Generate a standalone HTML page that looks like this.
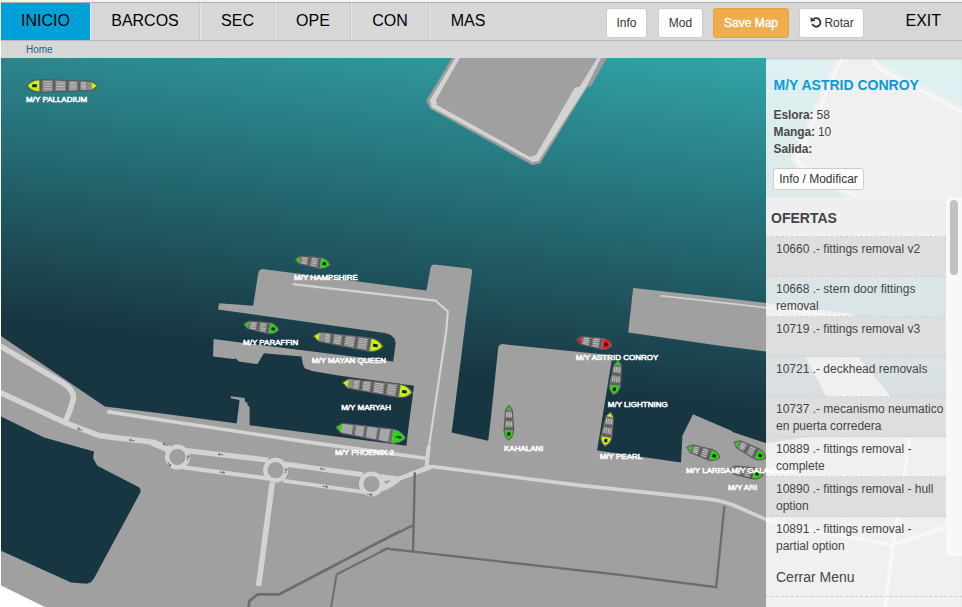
<!DOCTYPE html>
<html lang="es">
<head>
<meta charset="utf-8">
<title>Marina - Inicio</title>
<style>
html,body{margin:0;padding:0;background:#fff;}
body{width:962px;height:607px;overflow:hidden;position:relative;font-family:"Liberation Sans",Arial,Helvetica,sans-serif;color:#333;}
#map{position:absolute;left:0;top:0;}
#topline{position:absolute;left:0;top:0;width:962px;height:2px;background:#f3f3f3;}
#nav{position:absolute;left:1px;top:2px;width:961px;height:39px;background:#d7d7d7;border-top:1px solid #adadad;box-sizing:border-box;border-bottom:1px solid #b8b8b8;}
.tab{position:absolute;top:0;height:37px;line-height:35px;font-size:16px;color:#000;text-align:center;box-sizing:border-box;border-right:1px solid #c9c9c9;border-left:1px solid #e6e6e6;}
.tab.on{background:#00a1d9;border-color:#00a1d9;}
#exit{position:absolute;left:904.5px;top:0;height:37px;line-height:35px;font-size:16px;color:#000;}
.btn{position:absolute;box-sizing:border-box;height:30px;line-height:27px;font-size:12px;color:#333;background:#fff;border:1px solid #ccc;border-radius:3px;text-align:center;}
.btn.w{background:#f0ad4e;border-color:#eea236;color:#fff;-webkit-text-stroke:0.35px #fff;}
#crumb{position:absolute;left:1px;top:41px;width:961px;height:17px;background:#d7d7d7;font-size:10px;line-height:18px;color:#17628a;}
#crumb span{position:absolute;left:25px;top:0;}
#panel{position:absolute;left:766px;top:58px;width:196px;height:549px;background:rgba(255,255,255,0.84);box-shadow:inset 0 2px 2px -1px rgba(0,0,0,0.18);}
#panel h3{position:absolute;left:7.5px;top:19px;margin:0;font-size:14px;line-height:16px;font-weight:bold;color:#0a9ad7;white-space:nowrap;}
.kv{position:absolute;left:7.5px;font-size:12px;line-height:17px;color:#444;white-space:nowrap;}
.kv b{color:#4a4a4a;letter-spacing:-0.1px;}.kv i{font-style:normal;margin-left:3px;}
#im{left:7px;top:110px;width:91px;height:22px;line-height:20px;font-size:12px;}
#list{position:absolute;left:0;top:139px;width:180px;height:359px;overflow:hidden;}
#track{position:absolute;left:180px;top:139px;width:16px;height:359px;background:#f8f8f8;}
#thumb{position:absolute;left:4px;top:3px;width:8px;height:75px;border-radius:4px;background:#c1c1c1;}
#oh{position:absolute;left:0;top:0;width:181px;height:40px;background:#efefef;border-bottom:1px dashed #ccc;box-sizing:border-box;font-size:14px;font-weight:bold;color:#444;line-height:16px;}
#oh span{position:absolute;left:5px;top:13px;}
.it{position:absolute;left:0;width:181px;height:40px;box-sizing:border-box;border-bottom:1px dashed #cfcfcf;padding:4px 0 0 10px;font-size:12px;line-height:17px;color:#444;white-space:nowrap;overflow:hidden;}
.it.odd{background:#dedede;}
#cerrar{position:absolute;left:0;top:498px;width:196px;height:41px;box-sizing:border-box;border-bottom:1px dashed #ccc;font-size:14px;color:#444;line-height:16px;}
#cerrar span{position:absolute;left:10px;top:13px;}
</style>
</head>
<body>
<svg id="map" width="962" height="607" viewBox="0 0 962 607">
<defs>
<linearGradient id="sea" gradientUnits="userSpaceOnUse" x1="484.8" y1="19.3" x2="441.4" y2="371.5"><stop offset="0" stop-color="#32a5a9"/><stop offset="1" stop-color="#183642"/></linearGradient>
<clipPath id="mc"><rect x="1" y="58" width="961" height="549"/></clipPath>
<g id="hullbody"><path d="M9,-7.6 L80,-8.6 Q92,-7.5 100,0 Q92,7.5 80,8.6 L9,7.6 Z" fill="#555"/><rect x="9.5" y="-7.2" width="71" height="14.4" fill="#8a8a8a"/><g fill="#5e5e5e"><rect x="17" y="-7.4" width="3.5" height="14.8"/><rect x="34" y="-7.6" width="3.5" height="15.2"/><rect x="51" y="-7.8" width="3.5" height="15.6"/><rect x="68" y="-8" width="3.5" height="16"/><rect x="77" y="-8.2" width="3.5" height="16.4"/></g><g stroke="#b4b4b4" stroke-width="1.1"><path d="M22,-5.5 H33 M39,-5.5 H50 M56,-5.5 H67"/><path d="M22,-3.3 H33 M39,-3.3 H50 M56,-3.3 H67"/><path d="M22,-1.1 H33 M39,-1.1 H50 M56,-1.1 H67"/><path d="M22,1.1 H33 M39,1.1 H50 M56,1.1 H67"/><path d="M22,3.3 H33 M39,3.3 H50 M56,3.3 H67"/><path d="M22,5.5 H33 M39,5.5 H50 M56,5.5 H67"/></g></g>
</defs>
<g clip-path="url(#mc)">
<rect x="0" y="50" width="962" height="560" fill="url(#sea)"/>
<polygon fill="#9c9c9c" points="452.5,57.0 426.0,101.0 430.5,108.7 532.0,165.0 540.0,163.5 587.0,87.5 591.0,86.0 607.5,57.0"/>
<polygon fill="#d3d3d3" points="455.8,57.0 430.0,100.0 431.5,107.2 532.5,162.0 538.5,161.0 586.0,87.5 601.5,57.0"/>
<polygon fill="#a0a0a0" points="460.4,57.0 436.0,100.0 437.0,105.0 530.0,157.0 536.0,155.0 575.0,87.5 579.5,87.0 598.0,57.0"/>
<polygon fill="#a0a0a0" points="836.0,57.0 790.0,160.5 801.5,173.0 962.0,260.0 962.0,106.0 880.0,63.0 872.0,57.0"/>
<path d="M842.5,57 L796.5,160 L804,168.5 L962,254 M872,57 L879,68.5 L962,112" stroke="#d3d3d3" stroke-width="3" fill="none"/>
<polygon fill="#a0a0a0" points="0.0,335.2 104.8,406.5 160.0,413.3 230.0,422.4 236.6,423.6 239.6,399.9 230.8,398.2 230.8,396.2 244.6,397.9 245.0,401.5 247.5,403.0 247.5,405.6 249.6,406.8 249.6,425.2 406.4,445.8 408.2,429.8 414.0,385.7 340.0,375.7 312.0,371.0 305.0,368.6 303.0,365.0 301.5,356.6 264.0,353.3 257.4,364.1 239.0,361.6 235.8,358.6 233.3,359.1 213.0,356.6 213.6,339.1 393.2,361.6 395.7,343.0 394.5,338.5 390.5,334.8 385.0,333.0 218.0,309.5 219.1,303.2 253.2,305.7 258.2,273.3 259.5,270.3 262.4,269.1 426.5,290.4 430.6,267.6 431.8,265.3 434.0,264.6 469.7,268.6 471.6,269.4 472.2,271.2 465.8,320.0 453.3,419.8 451.6,432.4 488.2,440.7 490.7,419.8 498.2,347.6 499.5,345.0 502.4,344.1 600.0,354.1 610.7,356.5 612.1,357.5 597.1,450.6 681.0,462.4 682.4,435.7 693.0,414.2 732.0,430.9 732.5,432.0 766.3,443.3 814.0,436.0 826.0,396.0 805.0,356.0 858.0,356.0 890.0,396.0 900.0,430.0 962.0,425.0 962.0,610.0 0.0,610.0"/>
<polygon fill="#a0a0a0" points="633.2,288.0 720.0,297.4 850.0,313.5 855.0,316.0 856.0,321.0 852.0,362.0 720.0,345.7 628.2,332.4"/>
<path d="M660.6,295.8 L720,302.4 L845,317" stroke="#d3d3d3" stroke-width="1.6" fill="none"/>
<polygon fill="#183642" points="0.0,416.0 44.0,437.4 94.0,451.6 93.1,458.2 97.3,465.7 138.9,487.3 140.6,489.5 140.4,492.3 94.1,578.3 91.0,582.3 86.8,583.8 71.1,582.5 0.0,550.3"/>
<polygon fill="#fff" points="0.0,585.0 46.0,607.5 0.0,608.0"/>
<path d="M292.8,284.1 L435.6,300.7 L447.8,311.5 L446.4,330 L431.5,429.8 L428.4,450" stroke="#d3d3d3" stroke-width="2.2" fill="none" stroke-linejoin="round"/>
<path d="M428.8,446 L426.4,467" stroke="#d3d3d3" stroke-width="4" fill="none" />
<path d="M107.3,411.6 L150,418.3 L310,442.4 L425.6,458.2" stroke="#d3d3d3" stroke-width="3.6" fill="none" />
<path d="M0,346 L62,382.4 Q76,391 72.8,401 Q70,411 65.7,421" stroke="#d3d3d3" stroke-width="5.6" fill="none" />
<path d="M0,392.5 L66.5,423.3 L99.8,435.8 L150,441.7 L169,449.5" stroke="#d3d3d3" stroke-width="5.4" fill="none" stroke-linejoin="round"/>
<circle cx="177.4" cy="457.1" r="10.3" fill="none" stroke="#d3d3d3" stroke-width="4.4"/>
<circle cx="275.6" cy="470.2" r="10.3" fill="none" stroke="#d3d3d3" stroke-width="4.4"/>
<circle cx="371.5" cy="484" r="10.3" fill="none" stroke="#d3d3d3" stroke-width="4.4"/>
<path d="M186,450.6 L268,460.1" stroke="#d3d3d3" stroke-width="5.2" fill="none" />
<path d="M152,442.2 L169,449.2" stroke="#d3d3d3" stroke-width="7" fill="none" />
<path d="M183.3,467.4 L268.5,478.4" stroke="#d3d3d3" stroke-width="4.2" fill="none" />
<path d="M284.7,464 L363,474.8" stroke="#d3d3d3" stroke-width="5" fill="none" />
<path d="M283,480.7 L364,492.2" stroke="#d3d3d3" stroke-width="3.8" fill="none" />
<path d="M272.3,482.5 L258.6,586" stroke="#d3d3d3" stroke-width="5.6" fill="none" />
<path d="M426,466.6 L433.7,466.7 L580,485.4 L709.3,499.1 Q725,501 740,508 L767,519.8 L802,529 L893,545 L962,521" stroke="#d3d3d3" stroke-width="3.6" fill="none" stroke-linejoin="round"/>
<path d="M380.1,474.1 L398.9,476.5 L426.9,465.4 L432.1,468.9 L400.9,480.3 Q392,488.4 381.8,491.4 Q386,483 380.1,474.1 Z" fill="#d3d3d3"/>
<polygon points="383.9,481.3 391.4,480.2 386,484.2" fill="#a0a0a0"/>
<path d="M910,438 L893,545 L885,608" stroke="#d3d3d3" stroke-width="3.6" fill="none" />
<path d="M414.8,472.4 L413,551.5" stroke="#6c6c6c" stroke-width="2.4" fill="none" />
<path d="M413,525.3 L380,541.8 L372,546" stroke="#6c6c6c" stroke-width="2.2" fill="none" />
<path d="M400,531.1 L279.3,594.3 L257.8,594.3 L249.3,601 L248.6,608" stroke="#6c6c6c" stroke-width="2.7" fill="none" stroke-linejoin="round"/>
<path d="M400,550.4 L387,548.6 L336.6,574.3 L331,608" stroke="#6c6c6c" stroke-width="2.0" fill="none" stroke-linejoin="round"/>
<path d="M380,551.5 L386.9,548.7 L620,574.9 L716.2,587.2 L724.4,506" stroke="#6c6c6c" stroke-width="2.3" fill="none" stroke-linejoin="miter"/>
<g transform="translate(80,429.5) rotate(200)" stroke="#666" stroke-width="0.8" fill="none"><path d="M-2.6,0 H2.6 M0.8,-1.4 L2.6,0 L0.8,1.4"/></g>
<g transform="translate(132,440.3) rotate(188)" stroke="#666" stroke-width="0.8" fill="none"><path d="M-2.6,0 H2.6 M0.8,-1.4 L2.6,0 L0.8,1.4"/></g>
<g transform="translate(165.5,444.6) rotate(200)" stroke="#666" stroke-width="0.8" fill="none"><path d="M-2.6,0 H2.6 M0.8,-1.4 L2.6,0 L0.8,1.4"/></g>
<g transform="translate(221,454.6) rotate(187)" stroke="#666" stroke-width="0.8" fill="none"><path d="M-2.6,0 H2.6 M0.8,-1.4 L2.6,0 L0.8,1.4"/></g>
<g transform="translate(222,472.4) rotate(7)" stroke="#666" stroke-width="0.8" fill="none"><path d="M-2.6,0 H2.6 M0.8,-1.4 L2.6,0 L0.8,1.4"/></g>
<g transform="translate(169,464) rotate(60)" stroke="#666" stroke-width="0.8" fill="none"><path d="M-2.6,0 H2.6 M0.8,-1.4 L2.6,0 L0.8,1.4"/></g>
<g transform="translate(187.8,458) rotate(-75)" stroke="#666" stroke-width="0.8" fill="none"><path d="M-2.6,0 H2.6 M0.8,-1.4 L2.6,0 L0.8,1.4"/></g>
<g transform="translate(285.8,471) rotate(-75)" stroke="#666" stroke-width="0.8" fill="none"><path d="M-2.6,0 H2.6 M0.8,-1.4 L2.6,0 L0.8,1.4"/></g>
<g transform="translate(323,469) rotate(187)" stroke="#666" stroke-width="0.8" fill="none"><path d="M-2.6,0 H2.6 M0.8,-1.4 L2.6,0 L0.8,1.4"/></g>
<g transform="translate(325,486.5) rotate(7)" stroke="#666" stroke-width="0.8" fill="none"><path d="M-2.6,0 H2.6 M0.8,-1.4 L2.6,0 L0.8,1.4"/></g>
<g transform="translate(369.5,494.5) rotate(10)" stroke="#666" stroke-width="0.8" fill="none"><path d="M-2.6,0 H2.6 M0.8,-1.4 L2.6,0 L0.8,1.4"/></g>
<g transform="translate(97.6,85.8) rotate(180.0)"><path d="M0,0 L6.0,-4.41 L58.1,-6.30 Q66.2,-5.98 71.1,0 Q66.2,5.98 58.1,6.30 L6.0,4.41 Z" fill="#8e8e8e" stroke="#565656" stroke-width="1.1" stroke-linejoin="round"/><polygon points="10.6,-4.08 17.5,-4.33 17.5,4.33 10.6,4.08" fill="#7c7c7c" fill-opacity="1"/><polygon points="17.5,-4.33 20.1,-4.42 20.1,4.42 17.5,4.33" fill="#5e5e5e" fill-opacity="1"/><path d="M11.5,-3.23 L16.6,-3.36" stroke="#c6c6c6" stroke-width="0.8"/><path d="M11.5,-1.94 L16.6,-2.01" stroke="#c6c6c6" stroke-width="0.8"/><path d="M11.5,-0.65 L16.6,-0.67" stroke="#c6c6c6" stroke-width="0.8"/><path d="M11.5,0.65 L16.6,0.67" stroke="#c6c6c6" stroke-width="0.8"/><path d="M11.5,1.94 L16.6,2.01" stroke="#c6c6c6" stroke-width="0.8"/><path d="M11.5,3.23 L16.6,3.36" stroke="#c6c6c6" stroke-width="0.8"/><polygon points="20.1,-4.42 29.0,-4.74 29.0,4.74 20.1,4.42" fill="#7c7c7c" fill-opacity="1"/><polygon points="29.0,-4.74 31.6,-4.84 31.6,4.84 29.0,4.74" fill="#5e5e5e" fill-opacity="1"/><path d="M21.0,-3.47 L28.1,-3.65" stroke="#c6c6c6" stroke-width="0.8"/><path d="M21.0,-2.08 L28.1,-2.19" stroke="#c6c6c6" stroke-width="0.8"/><path d="M21.0,-0.69 L28.1,-0.73" stroke="#c6c6c6" stroke-width="0.8"/><path d="M21.0,0.69 L28.1,0.73" stroke="#c6c6c6" stroke-width="0.8"/><path d="M21.0,2.08 L28.1,2.19" stroke="#c6c6c6" stroke-width="0.8"/><path d="M21.0,3.47 L28.1,3.65" stroke="#c6c6c6" stroke-width="0.8"/><polygon points="31.6,-4.84 42.3,-5.23 42.3,5.23 31.6,4.84" fill="#7c7c7c" fill-opacity="1"/><polygon points="42.3,-5.23 44.9,-5.32 44.9,5.32 42.3,5.23" fill="#5e5e5e" fill-opacity="1"/><path d="M32.5,-3.76 L41.4,-3.99" stroke="#c6c6c6" stroke-width="0.8"/><path d="M32.5,-2.26 L41.4,-2.39" stroke="#c6c6c6" stroke-width="0.8"/><path d="M32.5,-0.75 L41.4,-0.80" stroke="#c6c6c6" stroke-width="0.8"/><path d="M32.5,0.75 L41.4,0.80" stroke="#c6c6c6" stroke-width="0.8"/><path d="M32.5,2.26 L41.4,2.39" stroke="#c6c6c6" stroke-width="0.8"/><path d="M32.5,3.76 L41.4,3.99" stroke="#c6c6c6" stroke-width="0.8"/><polygon points="44.9,-5.32 55.2,-5.69 55.2,5.69 44.9,5.32" fill="#7c7c7c" fill-opacity="1"/><polygon points="55.2,-5.69 57.8,-5.79 57.8,5.79 55.2,5.69" fill="#5e5e5e" fill-opacity="1"/><path d="M45.8,-4.10 L54.3,-4.31" stroke="#c6c6c6" stroke-width="0.8"/><path d="M45.8,-2.46 L54.3,-2.59" stroke="#c6c6c6" stroke-width="0.8"/><path d="M45.8,-0.82 L54.3,-0.86" stroke="#c6c6c6" stroke-width="0.8"/><path d="M45.8,0.82 L54.3,0.86" stroke="#c6c6c6" stroke-width="0.8"/><path d="M45.8,2.46 L54.3,2.59" stroke="#c6c6c6" stroke-width="0.8"/><path d="M45.8,4.10 L54.3,4.31" stroke="#c6c6c6" stroke-width="0.8"/><path d="M58.6,-5.40 Q66.2,-5.04 69.6,0 Q66.2,5.04 58.6,5.40 Z" fill="#c8f400"/><rect x="60.7" y="-1.5" width="4.7" height="3" rx="0.6" fill="#1c1c2c"/><path d="M0.9,0 L5.8,-3.61 L5.8,3.61 Z" fill="#c8f400"/></g>
<g transform="translate(294.9,259.2) rotate(8.7)"><path d="M0,0 L4.8,-3.92 L26.1,-5.60 Q32.1,-5.32 35.7,0 Q32.1,5.32 26.1,5.60 L4.8,3.92 Z" fill="#8e8e8e" stroke="#565656" stroke-width="1.1" stroke-linejoin="round"/><polygon points="6.0,-3.51 13.3,-4.09 13.3,4.09 6.0,3.51" fill="#7c7c7c" fill-opacity="1"/><polygon points="13.3,-4.09 15.9,-4.30 15.9,4.30 13.3,4.09" fill="#5e5e5e" fill-opacity="1"/><path d="M6.9,-2.57 L12.4,-2.85" stroke="#c6c6c6" stroke-width="0.95"/><path d="M6.9,-0.86 L12.4,-0.95" stroke="#c6c6c6" stroke-width="0.95"/><path d="M6.9,0.86 L12.4,0.95" stroke="#c6c6c6" stroke-width="0.95"/><path d="M6.9,2.57 L12.4,2.85" stroke="#c6c6c6" stroke-width="0.95"/><polygon points="15.9,-4.30 23.2,-4.87 23.2,4.87 15.9,4.30" fill="#7c7c7c" fill-opacity="1"/><polygon points="23.2,-4.87 25.8,-5.08 25.8,5.08 23.2,4.87" fill="#5e5e5e" fill-opacity="1"/><path d="M16.8,-3.07 L22.3,-3.34" stroke="#c6c6c6" stroke-width="0.95"/><path d="M16.8,-1.02 L22.3,-1.11" stroke="#c6c6c6" stroke-width="0.95"/><path d="M16.8,1.02 L22.3,1.11" stroke="#c6c6c6" stroke-width="0.95"/><path d="M16.8,3.07 L22.3,3.34" stroke="#c6c6c6" stroke-width="0.95"/><polygon points="5.0,-3.44 6.0,-3.51 6.0,3.51 5.0,3.44" fill="#6a6a6a" fill-opacity="1"/><path d="M26.6,-4.70 Q32.1,-4.48 34.2,0 Q32.1,4.48 26.6,4.70 Z" fill="#1fdc00"/><rect x="28.0" y="-1.5" width="3.5" height="3" rx="0.6" fill="#1c1c2c"/><path d="M0.9,0 L4.6,-3.12 L4.6,3.12 Z" fill="#1fdc00"/></g>
<g transform="translate(243.6,324.2) rotate(9.0)"><path d="M0,0 L4.8,-3.92 L26.2,-5.60 Q32.2,-5.32 35.8,0 Q32.2,5.32 26.2,5.60 L4.8,3.92 Z" fill="#8e8e8e" stroke="#565656" stroke-width="1.1" stroke-linejoin="round"/><polygon points="6.0,-3.51 13.4,-4.09 13.4,4.09 6.0,3.51" fill="#7c7c7c" fill-opacity="1"/><polygon points="13.4,-4.09 16.0,-4.30 16.0,4.30 13.4,4.09" fill="#5e5e5e" fill-opacity="1"/><path d="M6.9,-2.57 L12.5,-2.85" stroke="#c6c6c6" stroke-width="0.95"/><path d="M6.9,-0.86 L12.5,-0.95" stroke="#c6c6c6" stroke-width="0.95"/><path d="M6.9,0.86 L12.5,0.95" stroke="#c6c6c6" stroke-width="0.95"/><path d="M6.9,2.57 L12.5,2.85" stroke="#c6c6c6" stroke-width="0.95"/><polygon points="16.0,-4.30 23.3,-4.87 23.3,4.87 16.0,4.30" fill="#7c7c7c" fill-opacity="1"/><polygon points="23.3,-4.87 25.9,-5.08 25.9,5.08 23.3,4.87" fill="#5e5e5e" fill-opacity="1"/><path d="M16.9,-3.07 L22.4,-3.34" stroke="#c6c6c6" stroke-width="0.95"/><path d="M16.9,-1.02 L22.4,-1.11" stroke="#c6c6c6" stroke-width="0.95"/><path d="M16.9,1.02 L22.4,1.11" stroke="#c6c6c6" stroke-width="0.95"/><path d="M16.9,3.07 L22.4,3.34" stroke="#c6c6c6" stroke-width="0.95"/><polygon points="5.0,-3.44 6.0,-3.51 6.0,3.51 5.0,3.44" fill="#6a6a6a" fill-opacity="1"/><path d="M26.7,-4.70 Q32.2,-4.48 34.3,0 Q32.2,4.48 26.7,4.70 Z" fill="#1fdc00"/><rect x="28.2" y="-1.5" width="3.5" height="3" rx="0.6" fill="#1c1c2c"/><path d="M0.9,0 L4.6,-3.12 L4.6,3.12 Z" fill="#1fdc00"/></g>
<g transform="translate(313.4,335.9) rotate(8.8)"><path d="M0,0 L6.0,-4.69 L57.7,-6.70 Q65.8,-6.37 70.7,0 Q65.8,6.37 57.7,6.70 L6.0,4.69 Z" fill="#8e8e8e" stroke="#565656" stroke-width="1.1" stroke-linejoin="round"/><polygon points="10.6,-4.37 17.5,-4.64 17.5,4.64 10.6,4.37" fill="#7c7c7c" fill-opacity="1"/><polygon points="17.5,-4.64 20.1,-4.74 20.1,4.74 17.5,4.64" fill="#5e5e5e" fill-opacity="1"/><path d="M11.5,-3.43 L16.6,-3.57" stroke="#c6c6c6" stroke-width="0.8"/><path d="M11.5,-2.06 L16.6,-2.14" stroke="#c6c6c6" stroke-width="0.8"/><path d="M11.5,-0.69 L16.6,-0.71" stroke="#c6c6c6" stroke-width="0.8"/><path d="M11.5,0.69 L16.6,0.71" stroke="#c6c6c6" stroke-width="0.8"/><path d="M11.5,2.06 L16.6,2.14" stroke="#c6c6c6" stroke-width="0.8"/><path d="M11.5,3.43 L16.6,3.57" stroke="#c6c6c6" stroke-width="0.8"/><polygon points="20.1,-4.74 28.8,-5.08 28.8,5.08 20.1,4.74" fill="#7c7c7c" fill-opacity="1"/><polygon points="28.8,-5.08 31.4,-5.18 31.4,5.18 28.8,5.08" fill="#5e5e5e" fill-opacity="1"/><path d="M21.0,-3.69 L27.9,-3.88" stroke="#c6c6c6" stroke-width="0.8"/><path d="M21.0,-2.21 L27.9,-2.33" stroke="#c6c6c6" stroke-width="0.8"/><path d="M21.0,-0.74 L27.9,-0.78" stroke="#c6c6c6" stroke-width="0.8"/><path d="M21.0,0.74 L27.9,0.78" stroke="#c6c6c6" stroke-width="0.8"/><path d="M21.0,2.21 L27.9,2.33" stroke="#c6c6c6" stroke-width="0.8"/><path d="M21.0,3.69 L27.9,3.88" stroke="#c6c6c6" stroke-width="0.8"/><polygon points="31.4,-5.18 42.0,-5.59 42.0,5.59 31.4,5.18" fill="#7c7c7c" fill-opacity="1"/><polygon points="42.0,-5.59 44.6,-5.69 44.6,5.69 42.0,5.59" fill="#5e5e5e" fill-opacity="1"/><path d="M32.3,-4.00 L41.1,-4.24" stroke="#c6c6c6" stroke-width="0.8"/><path d="M32.3,-2.40 L41.1,-2.54" stroke="#c6c6c6" stroke-width="0.8"/><path d="M32.3,-0.80 L41.1,-0.85" stroke="#c6c6c6" stroke-width="0.8"/><path d="M32.3,0.80 L41.1,0.85" stroke="#c6c6c6" stroke-width="0.8"/><path d="M32.3,2.40 L41.1,2.54" stroke="#c6c6c6" stroke-width="0.8"/><path d="M32.3,4.00 L41.1,4.24" stroke="#c6c6c6" stroke-width="0.8"/><polygon points="44.6,-5.69 54.8,-6.09 54.8,6.09 44.6,5.69" fill="#7c7c7c" fill-opacity="1"/><polygon points="54.8,-6.09 57.4,-6.19 57.4,6.19 54.8,6.09" fill="#5e5e5e" fill-opacity="1"/><path d="M45.5,-4.36 L53.9,-4.59" stroke="#c6c6c6" stroke-width="0.8"/><path d="M45.5,-2.62 L53.9,-2.75" stroke="#c6c6c6" stroke-width="0.8"/><path d="M45.5,-0.87 L53.9,-0.92" stroke="#c6c6c6" stroke-width="0.8"/><path d="M45.5,0.87 L53.9,0.92" stroke="#c6c6c6" stroke-width="0.8"/><path d="M45.5,2.62 L53.9,2.75" stroke="#c6c6c6" stroke-width="0.8"/><path d="M45.5,4.36 L53.9,4.59" stroke="#c6c6c6" stroke-width="0.8"/><path d="M58.2,-5.80 Q65.8,-5.36 69.2,0 Q65.8,5.36 58.2,5.80 Z" fill="#c8f400"/><rect x="60.3" y="-1.5" width="4.7" height="3" rx="0.6" fill="#1c1c2c"/><path d="M0.9,0 L5.8,-3.89 L5.8,3.89 Z" fill="#c8f400"/></g>
<g transform="translate(342.4,382.6) rotate(8.3)"><path d="M0,0 L6.0,-4.69 L57.7,-6.70 Q65.8,-6.37 70.7,0 Q65.8,6.37 57.7,6.70 L6.0,4.69 Z" fill="#8e8e8e" stroke="#565656" stroke-width="1.1" stroke-linejoin="round"/><polygon points="10.6,-4.37 17.5,-4.64 17.5,4.64 10.6,4.37" fill="#7c7c7c" fill-opacity="1"/><polygon points="17.5,-4.64 20.1,-4.74 20.1,4.74 17.5,4.64" fill="#5e5e5e" fill-opacity="1"/><path d="M11.5,-3.43 L16.6,-3.57" stroke="#c6c6c6" stroke-width="0.8"/><path d="M11.5,-2.06 L16.6,-2.14" stroke="#c6c6c6" stroke-width="0.8"/><path d="M11.5,-0.69 L16.6,-0.71" stroke="#c6c6c6" stroke-width="0.8"/><path d="M11.5,0.69 L16.6,0.71" stroke="#c6c6c6" stroke-width="0.8"/><path d="M11.5,2.06 L16.6,2.14" stroke="#c6c6c6" stroke-width="0.8"/><path d="M11.5,3.43 L16.6,3.57" stroke="#c6c6c6" stroke-width="0.8"/><polygon points="20.1,-4.74 28.8,-5.08 28.8,5.08 20.1,4.74" fill="#7c7c7c" fill-opacity="1"/><polygon points="28.8,-5.08 31.4,-5.18 31.4,5.18 28.8,5.08" fill="#5e5e5e" fill-opacity="1"/><path d="M21.0,-3.69 L27.9,-3.88" stroke="#c6c6c6" stroke-width="0.8"/><path d="M21.0,-2.21 L27.9,-2.33" stroke="#c6c6c6" stroke-width="0.8"/><path d="M21.0,-0.74 L27.9,-0.78" stroke="#c6c6c6" stroke-width="0.8"/><path d="M21.0,0.74 L27.9,0.78" stroke="#c6c6c6" stroke-width="0.8"/><path d="M21.0,2.21 L27.9,2.33" stroke="#c6c6c6" stroke-width="0.8"/><path d="M21.0,3.69 L27.9,3.88" stroke="#c6c6c6" stroke-width="0.8"/><polygon points="31.4,-5.18 42.1,-5.59 42.1,5.59 31.4,5.18" fill="#7c7c7c" fill-opacity="1"/><polygon points="42.1,-5.59 44.7,-5.69 44.7,5.69 42.1,5.59" fill="#5e5e5e" fill-opacity="1"/><path d="M32.3,-4.00 L41.2,-4.24" stroke="#c6c6c6" stroke-width="0.8"/><path d="M32.3,-2.40 L41.2,-2.54" stroke="#c6c6c6" stroke-width="0.8"/><path d="M32.3,-0.80 L41.2,-0.85" stroke="#c6c6c6" stroke-width="0.8"/><path d="M32.3,0.80 L41.2,0.85" stroke="#c6c6c6" stroke-width="0.8"/><path d="M32.3,2.40 L41.2,2.54" stroke="#c6c6c6" stroke-width="0.8"/><path d="M32.3,4.00 L41.2,4.24" stroke="#c6c6c6" stroke-width="0.8"/><polygon points="44.7,-5.69 54.8,-6.09 54.8,6.09 44.7,5.69" fill="#7c7c7c" fill-opacity="1"/><polygon points="54.8,-6.09 57.4,-6.19 57.4,6.19 54.8,6.09" fill="#5e5e5e" fill-opacity="1"/><path d="M45.6,-4.36 L53.9,-4.59" stroke="#c6c6c6" stroke-width="0.8"/><path d="M45.6,-2.62 L53.9,-2.75" stroke="#c6c6c6" stroke-width="0.8"/><path d="M45.6,-0.87 L53.9,-0.92" stroke="#c6c6c6" stroke-width="0.8"/><path d="M45.6,0.87 L53.9,0.92" stroke="#c6c6c6" stroke-width="0.8"/><path d="M45.6,2.62 L53.9,2.75" stroke="#c6c6c6" stroke-width="0.8"/><path d="M45.6,4.36 L53.9,4.59" stroke="#c6c6c6" stroke-width="0.8"/><path d="M58.2,-5.80 Q65.8,-5.36 69.2,0 Q65.8,5.36 58.2,5.80 Z" fill="#c8f400"/><rect x="60.3" y="-1.5" width="4.7" height="3" rx="0.6" fill="#1c1c2c"/><path d="M0.9,0 L5.8,-3.89 L5.8,3.89 Z" fill="#c8f400"/></g>
<g transform="translate(335.8,427.2) rotate(9.0)"><path d="M0,0 L6.0,-4.90 L57.6,-7.00 Q65.6,-6.65 70.6,0 Q65.6,6.65 57.6,7.00 L6.0,4.90 Z" fill="#a6a6a6" stroke="#5e5470" stroke-width="1.1" stroke-linejoin="round"/><polygon points="16.8,-4.84 20.0,-4.97 20.0,4.97 16.8,4.84" fill="#5a5a5a" fill-opacity="0.75"/><polygon points="28.1,-5.30 31.3,-5.43 31.3,5.43 28.1,5.30" fill="#5a5a5a" fill-opacity="0.75"/><polygon points="41.3,-5.84 44.5,-5.97 44.5,5.97 41.3,5.84" fill="#5a5a5a" fill-opacity="0.75"/><polygon points="54.1,-6.36 57.3,-6.49 57.3,6.49 54.1,6.36" fill="#5a5a5a" fill-opacity="0.75"/><path d="M58.1,-6.10 Q65.6,-5.60 69.1,0 Q65.6,5.60 58.1,6.10 Z" fill="#1fdc00"/><path d="M61.2,-0.7 h3.2 v-1.2 l2.4,1.9 l-2.4,1.9 v-1.2 h-3.2 Z" fill="#2a1840"/><path d="M0.9,0 L5.8,-4.10 L5.8,4.10 Z" fill="#1fdc00"/></g>
<g transform="translate(576.6,339.6) rotate(9.3)"><path d="M0,0 L4.8,-3.92 L26.2,-5.60 Q32.1,-5.32 35.8,0 Q32.1,5.32 26.2,5.60 L4.8,3.92 Z" fill="#8e8e8e" stroke="#565656" stroke-width="1.1" stroke-linejoin="round"/><polygon points="6.0,-3.51 13.3,-4.09 13.3,4.09 6.0,3.51" fill="#7c7c7c" fill-opacity="1"/><polygon points="13.3,-4.09 15.9,-4.30 15.9,4.30 13.3,4.09" fill="#5e5e5e" fill-opacity="1"/><path d="M6.9,-2.57 L12.4,-2.85" stroke="#c6c6c6" stroke-width="0.95"/><path d="M6.9,-0.86 L12.4,-0.95" stroke="#c6c6c6" stroke-width="0.95"/><path d="M6.9,0.86 L12.4,0.95" stroke="#c6c6c6" stroke-width="0.95"/><path d="M6.9,2.57 L12.4,2.85" stroke="#c6c6c6" stroke-width="0.95"/><polygon points="15.9,-4.30 23.3,-4.87 23.3,4.87 15.9,4.30" fill="#7c7c7c" fill-opacity="1"/><polygon points="23.3,-4.87 25.9,-5.08 25.9,5.08 23.3,4.87" fill="#5e5e5e" fill-opacity="1"/><path d="M16.8,-3.07 L22.4,-3.34" stroke="#c6c6c6" stroke-width="0.95"/><path d="M16.8,-1.02 L22.4,-1.11" stroke="#c6c6c6" stroke-width="0.95"/><path d="M16.8,1.02 L22.4,1.11" stroke="#c6c6c6" stroke-width="0.95"/><path d="M16.8,3.07 L22.4,3.34" stroke="#c6c6c6" stroke-width="0.95"/><polygon points="5.0,-3.44 6.0,-3.51 6.0,3.51 5.0,3.44" fill="#6a6a6a" fill-opacity="1"/><path d="M26.7,-4.70 Q32.1,-4.48 34.3,0 Q32.1,4.48 26.7,4.70 Z" fill="#ff0a0a"/><rect x="28.1" y="-1.5" width="3.5" height="3" rx="0.6" fill="#1c1c2c"/><path d="M0.9,0 L4.6,-3.12 L4.6,3.12 Z" fill="#ff0a0a"/></g>
<g transform="translate(509.0,405.3) rotate(90.3)"><path d="M0,0 L4.8,-3.36 L25.0,-4.80 Q31.0,-4.56 34.6,0 Q31.0,4.56 25.0,4.80 L4.8,3.36 Z" fill="#8e8e8e" stroke="#565656" stroke-width="1.1" stroke-linejoin="round"/><polygon points="6.0,-2.95 12.8,-3.43 12.8,3.43 6.0,2.95" fill="#7c7c7c" fill-opacity="1"/><polygon points="12.8,-3.43 15.4,-3.61 15.4,3.61 12.8,3.43" fill="#5e5e5e" fill-opacity="1"/><path d="M6.9,-2.21 L11.9,-2.43" stroke="#c6c6c6" stroke-width="0.95"/><path d="M6.9,-0.74 L11.9,-0.81" stroke="#c6c6c6" stroke-width="0.95"/><path d="M6.9,0.74 L11.9,0.81" stroke="#c6c6c6" stroke-width="0.95"/><path d="M6.9,2.21 L11.9,2.43" stroke="#c6c6c6" stroke-width="0.95"/><polygon points="15.4,-3.61 22.1,-4.09 22.1,4.09 15.4,3.61" fill="#7c7c7c" fill-opacity="1"/><polygon points="22.1,-4.09 24.7,-4.28 24.7,4.28 22.1,4.09" fill="#5e5e5e" fill-opacity="1"/><path d="M16.3,-2.63 L21.2,-2.85" stroke="#c6c6c6" stroke-width="0.95"/><path d="M16.3,-0.88 L21.2,-0.95" stroke="#c6c6c6" stroke-width="0.95"/><path d="M16.3,0.88 L21.2,0.95" stroke="#c6c6c6" stroke-width="0.95"/><path d="M16.3,2.63 L21.2,2.85" stroke="#c6c6c6" stroke-width="0.95"/><polygon points="5.0,-2.87 6.0,-2.95 6.0,2.95 5.0,2.87" fill="#6a6a6a" fill-opacity="1"/><path d="M25.5,-3.90 Q31.0,-3.84 33.1,0 Q31.0,3.84 25.5,3.90 Z" fill="#1fdc00"/><rect x="26.9" y="-1.5" width="3.5" height="3" rx="0.6" fill="#1c1c2c"/><path d="M0.9,0 L4.6,-2.56 L4.6,2.56 Z" fill="#1fdc00"/></g>
<g transform="translate(618.4,360.3) rotate(97.9)"><path d="M0,0 L4.8,-3.92 L25.4,-5.60 Q31.4,-5.32 35.0,0 Q31.4,5.32 25.4,5.60 L4.8,3.92 Z" fill="#8e8e8e" stroke="#565656" stroke-width="1.1" stroke-linejoin="round"/><polygon points="6.0,-3.52 13.0,-4.08 13.0,4.08 6.0,3.52" fill="#7c7c7c" fill-opacity="1"/><polygon points="13.0,-4.08 15.6,-4.30 15.6,4.30 13.0,4.08" fill="#5e5e5e" fill-opacity="1"/><path d="M6.9,-2.58 L12.1,-2.84" stroke="#c6c6c6" stroke-width="0.95"/><path d="M6.9,-0.86 L12.1,-0.95" stroke="#c6c6c6" stroke-width="0.95"/><path d="M6.9,0.86 L12.1,0.95" stroke="#c6c6c6" stroke-width="0.95"/><path d="M6.9,2.58 L12.1,2.84" stroke="#c6c6c6" stroke-width="0.95"/><polygon points="15.6,-4.30 22.5,-4.86 22.5,4.86 15.6,4.30" fill="#7c7c7c" fill-opacity="1"/><polygon points="22.5,-4.86 25.1,-5.08 25.1,5.08 22.5,4.86" fill="#5e5e5e" fill-opacity="1"/><path d="M16.5,-3.07 L21.6,-3.33" stroke="#c6c6c6" stroke-width="0.95"/><path d="M16.5,-1.02 L21.6,-1.11" stroke="#c6c6c6" stroke-width="0.95"/><path d="M16.5,1.02 L21.6,1.11" stroke="#c6c6c6" stroke-width="0.95"/><path d="M16.5,3.07 L21.6,3.33" stroke="#c6c6c6" stroke-width="0.95"/><polygon points="5.0,-3.44 6.0,-3.52 6.0,3.52 5.0,3.44" fill="#6a6a6a" fill-opacity="1"/><path d="M25.9,-4.70 Q31.4,-4.48 33.5,0 Q31.4,4.48 25.9,4.70 Z" fill="#1fdc00"/><rect x="27.4" y="-1.5" width="3.5" height="3" rx="0.6" fill="#1c1c2c"/><path d="M0.9,0 L4.6,-3.12 L4.6,3.12 Z" fill="#1fdc00"/></g>
<g transform="translate(610.6,412.1) rotate(99.6)"><path d="M0,0 L4.8,-3.92 L25.2,-5.60 Q31.1,-5.32 34.8,0 Q31.1,5.32 25.2,5.60 L4.8,3.92 Z" fill="#8e8e8e" stroke="#565656" stroke-width="1.1" stroke-linejoin="round"/><polygon points="6.0,-3.52 12.8,-4.08 12.8,4.08 6.0,3.52" fill="#7c7c7c" fill-opacity="1"/><polygon points="12.8,-4.08 15.4,-4.30 15.4,4.30 12.8,4.08" fill="#5e5e5e" fill-opacity="1"/><path d="M6.9,-2.58 L11.9,-2.84" stroke="#c6c6c6" stroke-width="0.95"/><path d="M6.9,-0.86 L11.9,-0.95" stroke="#c6c6c6" stroke-width="0.95"/><path d="M6.9,0.86 L11.9,0.95" stroke="#c6c6c6" stroke-width="0.95"/><path d="M6.9,2.58 L11.9,2.84" stroke="#c6c6c6" stroke-width="0.95"/><polygon points="15.4,-4.30 22.3,-4.86 22.3,4.86 15.4,4.30" fill="#7c7c7c" fill-opacity="1"/><polygon points="22.3,-4.86 24.9,-5.08 24.9,5.08 22.3,4.86" fill="#5e5e5e" fill-opacity="1"/><path d="M16.3,-3.07 L21.4,-3.33" stroke="#c6c6c6" stroke-width="0.95"/><path d="M16.3,-1.02 L21.4,-1.11" stroke="#c6c6c6" stroke-width="0.95"/><path d="M16.3,1.02 L21.4,1.11" stroke="#c6c6c6" stroke-width="0.95"/><path d="M16.3,3.07 L21.4,3.33" stroke="#c6c6c6" stroke-width="0.95"/><polygon points="5.0,-3.44 6.0,-3.52 6.0,3.52 5.0,3.44" fill="#6a6a6a" fill-opacity="1"/><path d="M25.7,-4.70 Q31.1,-4.48 33.3,0 Q31.1,4.48 25.7,4.70 Z" fill="#c8f400"/><rect x="27.1" y="-1.5" width="3.5" height="3" rx="0.6" fill="#1c1c2c"/><path d="M0.9,0 L4.6,-3.12 L4.6,3.12 Z" fill="#c8f400"/></g>
<g transform="translate(686.9,447.3) rotate(17.5)"><path d="M0,0 L4.8,-3.92 L24.9,-5.60 Q30.9,-5.32 34.5,0 Q30.9,5.32 24.9,5.60 L4.8,3.92 Z" fill="#8e8e8e" stroke="#565656" stroke-width="1.1" stroke-linejoin="round"/><polygon points="6.0,-3.52 12.7,-4.08 12.7,4.08 6.0,3.52" fill="#7c7c7c" fill-opacity="1"/><polygon points="12.7,-4.08 15.3,-4.30 15.3,4.30 12.7,4.08" fill="#5e5e5e" fill-opacity="1"/><path d="M6.9,-2.58 L11.8,-2.84" stroke="#c6c6c6" stroke-width="0.95"/><path d="M6.9,-0.86 L11.8,-0.95" stroke="#c6c6c6" stroke-width="0.95"/><path d="M6.9,0.86 L11.8,0.95" stroke="#c6c6c6" stroke-width="0.95"/><path d="M6.9,2.58 L11.8,2.84" stroke="#c6c6c6" stroke-width="0.95"/><polygon points="15.3,-4.30 22.0,-4.86 22.0,4.86 15.3,4.30" fill="#7c7c7c" fill-opacity="1"/><polygon points="22.0,-4.86 24.6,-5.07 24.6,5.07 22.0,4.86" fill="#5e5e5e" fill-opacity="1"/><path d="M16.2,-3.07 L21.1,-3.33" stroke="#c6c6c6" stroke-width="0.95"/><path d="M16.2,-1.02 L21.1,-1.11" stroke="#c6c6c6" stroke-width="0.95"/><path d="M16.2,1.02 L21.1,1.11" stroke="#c6c6c6" stroke-width="0.95"/><path d="M16.2,3.07 L21.1,3.33" stroke="#c6c6c6" stroke-width="0.95"/><polygon points="5.0,-3.44 6.0,-3.52 6.0,3.52 5.0,3.44" fill="#6a6a6a" fill-opacity="1"/><path d="M25.4,-4.70 Q30.9,-4.48 33.0,0 Q30.9,4.48 25.4,4.70 Z" fill="#1fdc00"/><rect x="26.8" y="-1.5" width="3.5" height="3" rx="0.6" fill="#1c1c2c"/><path d="M0.9,0 L4.6,-3.12 L4.6,3.12 Z" fill="#1fdc00"/></g>
<g transform="translate(734.2,442.1) rotate(27.4)"><path d="M0,0 L4.8,-3.92 L25.6,-5.60 Q31.5,-5.32 35.2,0 Q31.5,5.32 25.6,5.60 L4.8,3.92 Z" fill="#8e8e8e" stroke="#565656" stroke-width="1.1" stroke-linejoin="round"/><polygon points="6.0,-3.52 13.0,-4.09 13.0,4.09 6.0,3.52" fill="#7c7c7c" fill-opacity="1"/><polygon points="13.0,-4.09 15.6,-4.30 15.6,4.30 13.0,4.09" fill="#5e5e5e" fill-opacity="1"/><path d="M6.9,-2.58 L12.1,-2.84" stroke="#c6c6c6" stroke-width="0.95"/><path d="M6.9,-0.86 L12.1,-0.95" stroke="#c6c6c6" stroke-width="0.95"/><path d="M6.9,0.86 L12.1,0.95" stroke="#c6c6c6" stroke-width="0.95"/><path d="M6.9,2.58 L12.1,2.84" stroke="#c6c6c6" stroke-width="0.95"/><polygon points="15.6,-4.30 22.7,-4.87 22.7,4.87 15.6,4.30" fill="#7c7c7c" fill-opacity="1"/><polygon points="22.7,-4.87 25.3,-5.08 25.3,5.08 22.7,4.87" fill="#5e5e5e" fill-opacity="1"/><path d="M16.5,-3.07 L21.8,-3.33" stroke="#c6c6c6" stroke-width="0.95"/><path d="M16.5,-1.02 L21.8,-1.11" stroke="#c6c6c6" stroke-width="0.95"/><path d="M16.5,1.02 L21.8,1.11" stroke="#c6c6c6" stroke-width="0.95"/><path d="M16.5,3.07 L21.8,3.33" stroke="#c6c6c6" stroke-width="0.95"/><polygon points="5.0,-3.44 6.0,-3.52 6.0,3.52 5.0,3.44" fill="#6a6a6a" fill-opacity="1"/><path d="M26.1,-4.70 Q31.5,-4.48 33.7,0 Q31.5,4.48 26.1,4.70 Z" fill="#1fdc00"/><rect x="27.5" y="-1.5" width="3.5" height="3" rx="0.6" fill="#1c1c2c"/><path d="M0.9,0 L4.6,-3.12 L4.6,3.12 Z" fill="#1fdc00"/></g>
<g transform="translate(729.6,469.2) rotate(9.9)"><path d="M0,0 L4.8,-3.92 L24.3,-5.60 Q30.3,-5.32 33.9,0 Q30.3,5.32 24.3,5.60 L4.8,3.92 Z" fill="#8e8e8e" stroke="#565656" stroke-width="1.1" stroke-linejoin="round"/><polygon points="6.0,-3.52 12.4,-4.07 12.4,4.07 6.0,3.52" fill="#7c7c7c" fill-opacity="1"/><polygon points="12.4,-4.07 15.0,-4.30 15.0,4.30 12.4,4.07" fill="#5e5e5e" fill-opacity="1"/><path d="M6.9,-2.58 L11.5,-2.83" stroke="#c6c6c6" stroke-width="0.95"/><path d="M6.9,-0.86 L11.5,-0.94" stroke="#c6c6c6" stroke-width="0.95"/><path d="M6.9,0.86 L11.5,0.94" stroke="#c6c6c6" stroke-width="0.95"/><path d="M6.9,2.58 L11.5,2.83" stroke="#c6c6c6" stroke-width="0.95"/><polygon points="15.0,-4.30 21.4,-4.85 21.4,4.85 15.0,4.30" fill="#7c7c7c" fill-opacity="1"/><polygon points="21.4,-4.85 24.0,-5.07 24.0,5.07 21.4,4.85" fill="#5e5e5e" fill-opacity="1"/><path d="M15.9,-3.07 L20.5,-3.32" stroke="#c6c6c6" stroke-width="0.95"/><path d="M15.9,-1.02 L20.5,-1.11" stroke="#c6c6c6" stroke-width="0.95"/><path d="M15.9,1.02 L20.5,1.11" stroke="#c6c6c6" stroke-width="0.95"/><path d="M15.9,3.07 L20.5,3.32" stroke="#c6c6c6" stroke-width="0.95"/><polygon points="5.0,-3.44 6.0,-3.52 6.0,3.52 5.0,3.44" fill="#6a6a6a" fill-opacity="1"/><path d="M24.8,-4.70 Q30.3,-4.48 32.4,0 Q30.3,4.48 24.8,4.70 Z" fill="#1fdc00"/><rect x="26.2" y="-1.5" width="3.5" height="3" rx="0.6" fill="#1c1c2c"/><path d="M0.9,0 L4.6,-3.12 L4.6,3.12 Z" fill="#1fdc00"/></g>
<g font-family="'Liberation Sans', Arial, sans-serif" font-size="8" fill="#fff" stroke="#fff" stroke-width="0.55" style="paint-order:stroke">
<text x="26.1" y="101.9">M/Y PALLADIUM</text>
<text x="294.0" y="280.0">M/Y HAMPSHIRE</text>
<text x="243.0" y="344.8">M/Y PARAFFIN</text>
<text x="311.8" y="363.0">M/Y MAYAN QUEEN</text>
<text x="341.2" y="409.8">M/Y MARYAH</text>
<text x="334.9" y="454.9">M/Y PHOENIX 2</text>
<text x="575.8" y="359.8">M/Y ASTRID CONROY</text>
<text x="504.0" y="450.7">KAHALANI</text>
<text x="607.8" y="407.4">M/Y LIGHTNING</text>
<text x="599.7" y="458.8">M/Y PEARL</text>
<text x="685.9" y="472.5">M/Y LARISA</text>
<text x="731.3" y="472.5">M/Y GALACTICA</text>
<text x="728.0" y="489.5">M/Y ARI</text>
</g>
</g>
</svg>
<div id="topline"></div>
<div id="nav">
<div class="tab on" style="left:0;width:89px">INICIO</div>
<div class="tab" style="left:89px;width:110px">BARCOS</div>
<div class="tab" style="left:199px;width:75px">SEC</div>
<div class="tab" style="left:274px;width:76px">OPE</div>
<div class="tab" style="left:350px;width:78px">CON</div>
<div class="tab" style="left:428px;width:77px;border-right:0">MAS</div>
<div class="btn" style="left:605px;top:5px;width:41px;line-height:29px">Info</div>
<div class="btn" style="left:657px;top:5px;width:45px;line-height:29px">Mod</div>
<div class="btn w" style="left:712px;top:5px;width:76px;height:30px;line-height:28px">Save Map</div>
<div class="btn" style="left:798px;top:5px;width:65px;line-height:29px;padding-left:0"><svg width="12" height="12" viewBox="0 0 12 12" style="vertical-align:-0.8px;margin-right:3.2px;position:relative;left:0.3px"><path d="M3.3,3.4 A4.2,4.2 0 1 1 2.3,7.9" fill="none" stroke="#333" stroke-width="1.8"/><path d="M0.5,0.9 L0.8,5.8 L5.4,4.7 Z" fill="#333"/></svg>Rotar</div>
<div id="exit">EXIT</div>
</div>
<div id="crumb"><span>Home</span></div>
<div id="panel">
<h3>M/Y ASTRID CONROY</h3>
<div class="kv" style="top:49px"><b>Eslora:</b><i>58</i></div>
<div class="kv" style="top:66px"><b>Manga:</b><i>10</i></div>
<div class="kv" style="top:83px"><b>Salida:</b></div>
<div class="btn" id="im">Info / Modificar</div>
<div id="list">
<div id="oh"><span>OFERTAS</span></div>
<div class="it odd" style="top:40px">10660 .- fittings removal v2</div>
<div class="it" style="top:80px">10668 .- stern door fittings<br>removal</div>
<div class="it odd" style="top:120px">10719 .- fittings removal v3</div>
<div class="it" style="top:160px">10721 .- deckhead removals</div>
<div class="it odd" style="top:200px">10737 .- mecanismo neumatico<br>en puerta corredera</div>
<div class="it" style="top:240px">10889 .- fittings removal -<br>complete</div>
<div class="it odd" style="top:280px">10890 .- fittings removal - hull<br>option</div>
<div class="it" style="top:320px">10891 .- fittings removal -<br>partial option</div>
</div>
<div id="track"><div id="thumb"></div></div>
<div id="cerrar"><span>Cerrar Menu</span></div>
</div>
</body>
</html>
